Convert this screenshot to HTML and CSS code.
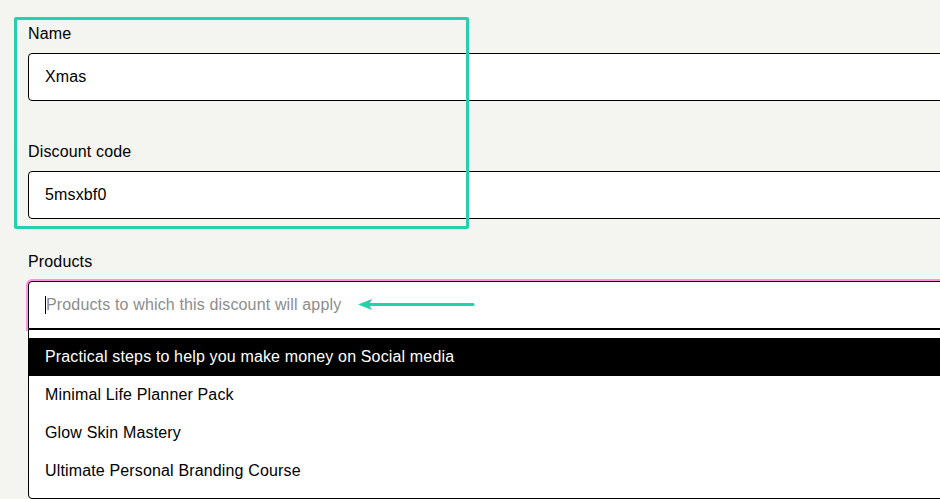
FILE: index.html
```html
<!DOCTYPE html>
<html lang="en">
<head>
    <meta charset="UTF-8">
    <meta name="viewport" content="width=device-width, initial-scale=1.0">
    <title>Edit discount</title>
    <link rel="stylesheet" href="styles.css">
</head>
<body>
    <form class="discount-form">
        <div class="field field-name">
            <label for="name">Name</label>
            <input type="text" id="name" class="text-input" value="Xmas">
        </div>
        <div class="field field-code">
            <label for="code">Discount code</label>
            <input type="text" id="code" class="text-input" value="5msxbf0">
        </div>
        <div class="field field-products">
            <label>Products</label>
            <div class="combobox">
                <div class="combo-input">
                    <span class="caret"></span>
                    <span class="placeholder">Products to which this discount will apply</span>
                </div>
                <ul class="combo-list">
                    <li class="combo-option active">Practical steps to help you make money on Social media</li>
                    <li class="combo-option">Minimal Life Planner Pack</li>
                    <li class="combo-option">Glow Skin Mastery</li>
                    <li class="combo-option">Ultimate Personal Branding Course</li>
                </ul>
            </div>
        </div>
    </form>

    <!-- Markierungen -->
    <div class="mark-box"></div>
    <svg class="mark-arrow" width="120" height="16" viewBox="0 0 120 16">
        <line x1="12" y1="7.5" x2="117" y2="7.5" stroke="#24d1ab" stroke-width="3" stroke-linecap="round"/>
        <polygon points="2,7.5 16,2 13,7.5 16,13" fill="#24d1ab"/>
    </svg>
</body>
</html>
```

FILE: styles.css
```css
/* Allgemeine Stile */
body {
    font-family: 'Liberation Sans', Arial, sans-serif;
    font-size: 16px;
    letter-spacing: 0.15px;
    background-color: #f4f4f0;
    color: #000;
    margin: 0;
    padding: 24px 0 0 28px;
    height: 100vh;
    box-sizing: border-box;
    overflow: hidden;
}

.discount-form {
    width: 1000px;
}

/* Formular-Felder */
.field {
    display: flex;
    flex-direction: column;
    gap: 9px;
}

.field-code {
    margin-top: 41px;
}

.field-products {
    margin-top: 33px;
}

label {
    line-height: 20px;
}

.text-input {
    height: 48px;
    padding: 0 16px;
    border: 1px solid #000;
    border-radius: 4px;
    background: #fff;
    font: inherit;
    letter-spacing: inherit;
    color: #000;
    box-sizing: border-box;
    outline: none;
}

/* Produktauswahl */
.combobox {
    display: flex;
    flex-direction: column;
}

.combo-input {
    height: 48px;
    padding: 0 16px;
    border: 1px solid #000;
    border-radius: 4px 4px 0 0;
    background: #fff;
    box-shadow: 0 0 0 2px #ff90e8;
    display: flex;
    align-items: center;
    box-sizing: border-box;
}

.caret {
    width: 1px;
    height: 18px;
    background: #000;
    margin-right: 0;
}

.placeholder {
    color: #8c8c8c;
}

.combo-list {
    position: relative;
    z-index: 1;
    list-style: none;
    margin: 0;
    padding: 8px 0;
    background: #fff;
    border: 1px solid #000;
    border-radius: 0 0 4px 4px;
}

.combo-option {
    height: 38px;
    line-height: 38px;
    padding: 0 16px;
}

.combo-option.active {
    background: #000;
    color: #fff;
}

/* Markierungen */
.mark-box {
    position: absolute;
    left: 14px;
    top: 17px;
    width: 449px;
    height: 206px;
    border: 3px solid #24d1ab;
    border-radius: 2px;
    pointer-events: none;
}

.mark-arrow {
    position: absolute;
    left: 356px;
    top: 297px;
}
```
